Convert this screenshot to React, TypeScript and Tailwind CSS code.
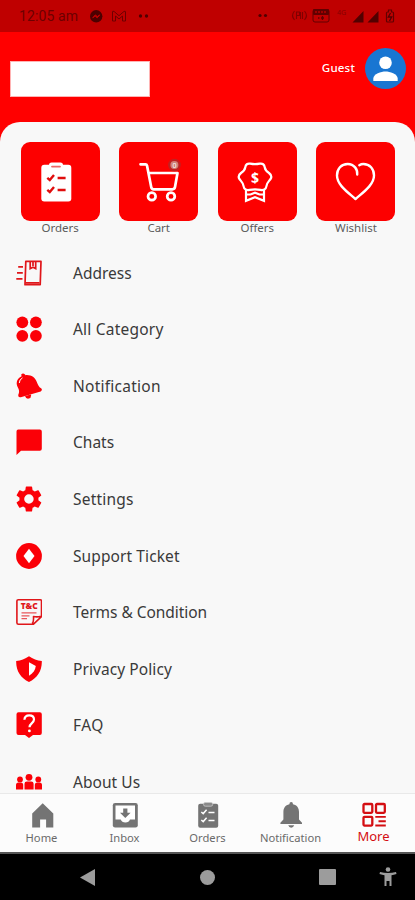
import type { ReactNode } from "react";

const FONT = "font-['Noto_Sans','Open_Sans',sans-serif]";

/* ---------- shortcut tiles ---------- */

const tiles: { label: string; art: ReactNode }[] = [
  {
    label: "Orders",
    art: (
      <>
        <rect x="20.3" y="22.8" width="30" height="36.6" rx="3" fill="#fff" />
        <rect x="28" y="20.4" width="14" height="6.4" rx="2.6" fill="#fff" />
        <path d="M31 24.6h8" stroke="#e66" strokeWidth="1.8" strokeLinecap="round" />
        <path d="M26.3 35.800l2.500 2.300 4.200-5M26.300 47.800l2.500 2.300 4.200-5M36.600 36h8M36.600 48h8" stroke="#e00d0d" strokeWidth="2.4" />
      </>
    ),
  },
  {
    label: "Cart",
    art: (
      <>
        <g stroke="#fff" strokeWidth="2.700" strokeLinecap="round" strokeLinejoin="round">
          <path d="M21.500 22.300h5q1.200 0 1.500 1.300L32.200 45q.4 2.300 2.600 2.300h18.600q2.200 0 2.600-2.200L58.500 31H30.500" />
          <circle cx="32.800" cy="54.400" r="3.800" />
          <circle cx="52" cy="54.400" r="3.800" />
        </g>
        <circle cx="55.400" cy="23" r="6.300" fill="#c22020" />
        <circle cx="55.400" cy="23" r="4" fill="#cf827a" />
        <text x="55.400" y="25.600" fontSize="7" fill="#fff" textAnchor="middle">0</text>
      </>
    ),
  },
  {
    label: "Offers",
    art: (
      <>
        <path
          d="M27.200 25.500q.8-4.600 5-3.800 4.800 1 9.600 0 4.200-.8 5 3.800c.3 2.600 1.600 3.800 4.200 5.500q3.600 2.700 1.600 6c-1.900 2.600-3.600 3.600-4 6.600-.6 3.800-3 5-6.200 4.300-3.600-.7-7.200-.7-10.800 0-3.200.7-5.600-.5-6.200-4.300-.4-3-2.100-4-4-6.600q-2-3.300 1.600-6c2.600-1.700 3.900-2.900 4.200-5.500z"
          stroke="#fff"
          strokeWidth="2.200"
          strokeLinejoin="round"
        />
        <path d="M28 47v11.800l9-3.500 9 3.500V47M29 52.500h3.500l4.500-1.800 4.500 1.800H45" stroke="#fff" strokeWidth="2.200" />
        <text x="37" y="40.500" fontSize="14" fontWeight="700" fill="#fff" textAnchor="middle">$</text>
      </>
    ),
  },
  {
    label: "Wishlist",
    art: (
      <path
        d="M41.200 32.500c.6-5-3-10.500-9.500-10.500C25.200 22 21 27 21 33.500 21 43.500 33.500 51.500 39.500 57 45.500 51.500 58 43.500 58 33.500 58 27 53.800 22 47.300 22q-2 0-4 1.200"
        stroke="#fff"
        strokeWidth="2.400"
        strokeLinecap="round"
        strokeLinejoin="round"
      />
    ),
  },
];

/* ---------- menu list, icons drawn on a 26px grid ---------- */

const RED = "#fb0007";

const menu: { label: string; tracking?: string; art: ReactNode }[] = [
  {
    label: "Address",
    art: (
      <g stroke="#e0161a" strokeWidth="1.700">
        <path d="M9.800 1.400H25L24.200 24.700H9z" strokeLinejoin="round" />
        <path d="M9.500 22.800h14M14.200 2v6.600l2.800-1.300 2.700 1.300V2M17 2v4M2.200 6.800h4.800M1 12.800h5.800M.3 18.800h6.200" />
      </g>
    ),
  },
  {
    label: "All Category",
    tracking: "tracking-[0.22px]",
    art: (
      <g fill={RED}>
        <circle cx="6.300" cy="6.300" r="5.900" />
        <circle cx="19.900" cy="6.300" r="5.900" />
        <circle cx="6.300" cy="19.800" r="5.900" />
        <circle cx="19.900" cy="19.800" r="5.900" />
      </g>
    ),
  },
  {
    label: "Notification",
    tracking: "tracking-[0.25px]",
    art: (
      <>
        <path
          d="M5.200 1.500Q7-.6 9 1.500L9.500 2.200C15 1.600 19 4.500 20.700 8.800c1.200 3 1.800 5 4.700 6.800q1.300 1.700-.7 2.800L4.800 24.300q-3 .2-2.500-2.600C4 18 2.600 16 1.200 13 -.4 8.500 1.800 5.300 5.600 3.300z"
          fill={RED}
        />
        <path d="M9 23l6-1.600q.6 3.600-2.200 4.200Q10 26.200 9 23z" fill={RED} />
        <path d="M3.300 10Q3.300 6.500 6.500 4.900" stroke="#fff" strokeWidth="1" />
      </>
    ),
  },
  { label: "Chats", art: <path d="M2.300.5h21.500q2 0 2 2v17.300q0 2-2 2H5L.5 26V2.500q0-2 1.800-2z" fill={RED} /> },
  {
    label: "Settings",
    tracking: "tracking-[0.2px]",
    art: (
      <path
        transform="translate(-2.900 -2.700) scale(1.320 1.310)"
        d="M19.140 12.940c.04-.3.060-.610.060-.940s-.020-.640-.070-.940l2.030-1.580a.49.49 0 0 0 .12-.61l-1.920-3.320a.49.49 0 0 0-.59-.22l-2.390.96a7 7 0 0 0-1.620-.94l-.36-2.540a.48.48 0 0 0-.48-.41h-3.840a.47.47 0 0 0-.47.41l-.36 2.540c-.59.24-1.130.57-1.620.94l-2.390-.96a.48.48 0 0 0-.59.22L2.740 8.870a.47.47 0 0 0 .12.61l2.030 1.580c-.05.3-.09.63-.09.94s.02.64.07.94l-2.030 1.580a.49.49 0 0 0-.12.61l1.920 3.320c.12.22.37.29.59.22l2.390-.96c.5.38 1.030.7 1.620.94l.36 2.540c.05.24.24.41.48.41h3.840c.24 0 .44-.17.47-.41l.36-2.540c.59-.24 1.130-.56 1.620-.94l2.390.96c.22.08.47 0 .59-.22l1.920-3.320a.47.47 0 0 0-.12-.61zM12 15.600a3.600 3.600 0 1 1 0-7.200 3.600 3.600 0 0 1 0 7.200z"
        fill={RED}
      />
    ),
  },
  {
    label: "Support Ticket",
    tracking: "tracking-[0.1px]",
    art: (
      <>
        <circle cx="13" cy="13" r="12.900" fill={RED} />
        <path d="M13 5.800L18.500 13 13 20.200 7.500 13z" fill="#fff" />
      </>
    ),
  },
  {
    label: "Terms & Condition",
    tracking: "tracking-[-0.04px]",
    art: (
      <>
        <path d="M2.300.8h22q1.200 0 1.200 1.300v15.400L17.500 25.200h-15Q.9 25.200.9 23.800V2.100Q.9.800 2.300.8zM16 24.500q1.800-.8 1.500-7 4 .8 7.500-.3" stroke="#e0161a" strokeWidth="1.600" strokeLinejoin="round" />
        <text x="13.300" y="10.300" fontSize="7.800" fontWeight="900" fill="#e0161a" textAnchor="middle" textLength="17" lengthAdjust="spacingAndGlyphs">
          T&amp;C
        </text>
        <path d="M5.500 13.800h15M5.500 16.800h8M5.500 19.600h5.500" stroke="#e8555a" strokeWidth="1.300" />
      </>
    ),
  },
  {
    label: "Privacy Policy",
    tracking: "tracking-[0.08px]",
    art: (
      <>
        <path d="M13 .2C17 3 21 4.500 25.800 5c.4 9.500-4.500 17.500-12.800 20.900C4.700 22.500-.2 14.500.2 5 5 4.500 9 3 13 .2z" fill={RED} />
        <path d="M13 6.300l6.800 3.800c-.3 4-2.800 7.200-6.800 9.600z" fill="#fff" />
      </>
    ),
  },
  {
    label: "FAQ",
    tracking: "tracking-[0.4px]",
    art: (
      <>
        <path d="M2.500.2h21.300q2 0 2 2v18.700q0 2-2 2H17L13 25.900l-4-3H2.500q-2 0-2-2V2.200q0-2 2-2z" fill={RED} />
        <path d="M8.400 7.800C8.600 4.800 10.500 3.300 13.200 3.300c3 0 4.800 1.800 4.800 4.300 0 3.400-4.300 3.700-4.500 7.600" stroke="#fff" strokeWidth="2.200" />
        <circle cx="13.400" cy="18.900" r="1.400" fill="#fff" />
      </>
    ),
  },
  {
    label: "About Us",
    tracking: "tracking-[0.05px]",
    art: (
      <g fill={RED}>
        <circle cx="13" cy="8.300" r="3.400" />
        <circle cx="4" cy="10.400" r="2.900" />
        <circle cx="22.300" cy="10.400" r="2.900" />
        <path d="M8.500 20.400v-5.600q0-2.400 2.400-2.400h4.300q2.400 0 2.400 2.400v5.600zM0 20.400v-4.300q0-2.500 2.500-2.500h2.200q2.500 0 2.500 2.500v4.300zM18.800 20.400v-4.300q0-2.500 2.500-2.500h2.200q2.500 0 2.500 2.500v4.300z" />
      </g>
    ),
  },
];

/* ---------- bottom tabs, icons drawn on a 26px grid ---------- */

const GREY = "#747474";

const tabs: { label: string; active?: boolean; art: ReactNode }[] = [
  { label: "Home", art: <path d="M13.700 1.200L24.300 11.500V25.500h-7.200v-8h-6v8H3.200V11.500z" fill={GREY} /> },
  {
    label: "Inbox",
    art: (
      <>
        <rect x=".8" y="1" width="25" height="24.500" rx="2.300" fill={GREY} />
        <path d="M3.500 3.600h19.500v14h-5q-1 3-4.600 3t-4.700-3H3.500z" fill="#fff" />
        <path d="M11.200 6.500h4.200v4.300h3.200l-5.300 5.200-5.300-5.200h3.200z" fill={GREY} />
      </>
    ),
  },
  {
    label: "Orders",
    art: (
      <>
        <rect x="3.200" y="1.700" width="20" height="24" rx="2" fill={GREY} />
        <rect x="8.500" y="0.400" width="9.200" height="3.800" rx="1.800" fill="#8a8a8a" stroke="#ccc" strokeWidth=".8" />
        <path d="M6.300 10l1.900 1.600 3.400-3.800M6.300 18l1.900 1.600 3.400-3.800M13.500 10.400h6M13.500 18.400h6" stroke="#fff" strokeWidth="1.500" />
      </>
    ),
  },
  {
    label: "Notification",
    art: (
      <>
        <path d="M13.200 0q1.800 0 1.800 2.200c4.200.9 6 4 6 7.800v7.500l3 3.300v1.200H2.400v-1.200l3-3.300V10c0-3.800 1.800-6.900 6-7.800Q11.400 0 13.200 0z" fill={GREY} />
        <path d="M10.200 23.300h6q-.8 2.400-3 2.400t-3-2.400z" fill={GREY} />
      </>
    ),
  },
  {
    label: "More",
    active: true,
    art: (
      <g stroke="#d40e12" strokeWidth="2.300">
        <rect x="2.500" y="2" width="8.800" height="8.800" rx="1" />
        <rect x="15" y="2" width="8.800" height="8.800" rx="1" />
        <rect x="2.500" y="14.800" width="8.800" height="8.800" rx="1" />
        <path d="M14.300 14.900h10.500M17.500 19.200h7.300M14.300 23.500h10.500" strokeWidth="1.900" />
      </g>
    ),
  },
];

function StatusBar() {
  return (
    <div className="flex h-8 items-center bg-[#bf0000] pl-[19px] pr-[18px] text-[#6c0000]">
      <span className="w-[71px] font-['Roboto',sans-serif] text-[14px] tracking-[0.1px]">12:05 am</span>
      <svg width="61" height="16" viewBox="0 0 61 16" fill="none">
        <circle cx="6.200" cy="8.300" r="6.200" fill="#4c0000" />
        <path d="M2.700 9.800l2.600-2.900 2 1.700 2.500-1.700-2.600 2.900-2-1.700z" fill="#bf0000" stroke="#bf0000" />
        <path d="M22.500 13V4q0-1.500 1.600-.5l4.900 4.200 4.900-4.200q1.600-1 1.600.5v9h-3V8L29 11l-3.500-3v5z" stroke="currentColor" />
        <circle cx="50.500" cy="8" r="1.700" fill="#500000" />
        <circle cx="56.500" cy="8" r="1.700" fill="#500000" />
      </svg>
      <svg className="ml-auto" width="140" height="18" viewBox="0 0 140 18" fill="none">
        <circle cx="3" cy="8.500" r="1.600" fill="#500000" />
        <circle cx="8.500" cy="8.500" r="1.600" fill="#500000" />
        <path d="M37.500 4q-4 4.500 0 9M47.500 4q4 4.500 0 9M39.500 12V5h3v3.500h-3M43.500 5v7M45.500 5v7" stroke="#800000" strokeWidth="1.100" />
        <rect x="56" y="2.500" width="16" height="12.500" rx="2" stroke="#610000" />
        <rect x="56" y="2" width="16" height="6" rx="1" fill="#610000" />
        <path d="M58 5h2m1 0h2m1 0h2m1 0h2" stroke="#a00000" strokeWidth="2" />
        <path d="M61 11h1.500m3-2v4m-1.500-2h3" stroke="#610000" strokeWidth="1.300" />
        <text x="80" y="8" fontSize="7" fill="#850000">4G</text>
        <path d="M106.500 4v11.500H95.500zM121.500 4v11.500h-11z" fill="#520000" />
        <path d="M130.500 5h1V3h3v2h1q1 0 1 1v8q0 1-1 1h-5q-1 0-1-1V6q0-1 1-1z" stroke="#610000" strokeWidth="1.200" />
        <path d="M133.500 6l-2.200 4h3.400L132.500 14" stroke="#520000" strokeWidth="1.300" />
      </svg>
    </div>
  );
}

function Header() {
  return (
    <header className="flex h-[90px] items-start bg-[#ff0000] pl-2.5 pr-[9.5px]">
      <div className="mt-[29px] h-9 w-[140px] border border-[#ffb4b4] bg-white" />
      <span className="ml-auto mt-7 text-[11.5px] font-medium leading-4 tracking-[0.2px] text-white">Guest</span>
      <svg className="ml-[9.5px] mt-4" width="41" height="41" viewBox="0 0 41 41">
        <circle cx="20.500" cy="20.500" r="20.500" fill="#1976d2" />
        <circle cx="20.500" cy="14.700" r="6.300" fill="#fff" />
        <path d="M8.300 33v-2.500c0-4.500 8-7 12.200-7s12.200 2.500 12.200 7V33z" fill="#fff" />
      </svg>
    </header>
  );
}

export default function App() {
  return (
    <div className={`flex h-[900px] w-[415px] flex-col overflow-hidden bg-[#ff0000] ${FONT}`}>
      <StatusBar />
      <Header />

      <main className="flex min-h-0 flex-1 flex-col overflow-hidden rounded-t-[20px] bg-[#f8f8f8] pt-[19.5px]">
        <div className="flex justify-between pl-[20.6px] pr-[19.6px]">
          {tiles.map(({ label, art }) => (
            <div key={label} className="flex h-[103px] w-[79px] flex-col items-center">
              <svg className="h-[79px] w-[79px] shrink-0 rounded-[9px] bg-[#fd0000]" viewBox="0 0 79 79" fill="none">
                {art}
              </svg>
              <span className="text-[11.5px] leading-[14px] text-[#5c5c5c]">{label}</span>
            </div>
          ))}
        </div>

        <ul className="flex flex-col">
          {menu.map(({ label, tracking = "", art }) => (
            <li key={label} className="flex h-[56.55px] shrink-0 items-center gap-[31px] pl-4">
              <svg className="h-[26px] w-[26px] shrink-0" viewBox="0 0 26 26" fill="none">
                {art}
              </svg>
              <span className={`text-[15.5px] leading-5 text-[#3a3a3a] ${tracking}`}>{label}</span>
            </li>
          ))}
        </ul>
      </main>

      <nav className="grid h-[59px] shrink-0 grid-cols-5 border-t border-[#e9e9e9] bg-[#fcfcfc] pt-2">
        {tabs.map(({ label, active, art }) => (
          <div key={label} className="flex flex-col items-center">
            <svg className="h-[26px] w-[26px] shrink-0" viewBox="0 0 26 26" fill="none">
              {art}
            </svg>
            {active ? (
              <span className="text-[13px] leading-4 text-[#d40e12]">{label}</span>
            ) : (
              <span className="mt-0.5 text-[11.2px] leading-4 text-[#6a6a6a]">{label}</span>
            )}
          </div>
        ))}
      </nav>

      <div className="flex h-12 shrink-0 items-center border-t-2 border-[#555] bg-black pl-20 pr-[18px] text-[#9c9c9c]">
        <svg width="15" height="17" viewBox="0 0 15 17" fill="currentColor">
          <path d="M15 0v17L0 8.500z" />
        </svg>
        <div className="ml-[105px] h-[15px] w-[15px] rounded-full bg-[#9c9c9c]" />
        <div className="ml-[104px] h-4 w-[17px] rounded-[1px] bg-[#9c9c9c]" />
        <svg className="ml-auto" width="18" height="20" viewBox="0 0 18 20" fill="currentColor">
          <circle cx="9" cy="2.500" r="2.300" />
          <path d="M1 5q8 2 16 0l.5 2q-3 .9-5 1.200V19h-2v-5h-3v5h-2V8.200Q3.500 7.900.5 7z" />
        </svg>
      </div>
    </div>
  );
}
